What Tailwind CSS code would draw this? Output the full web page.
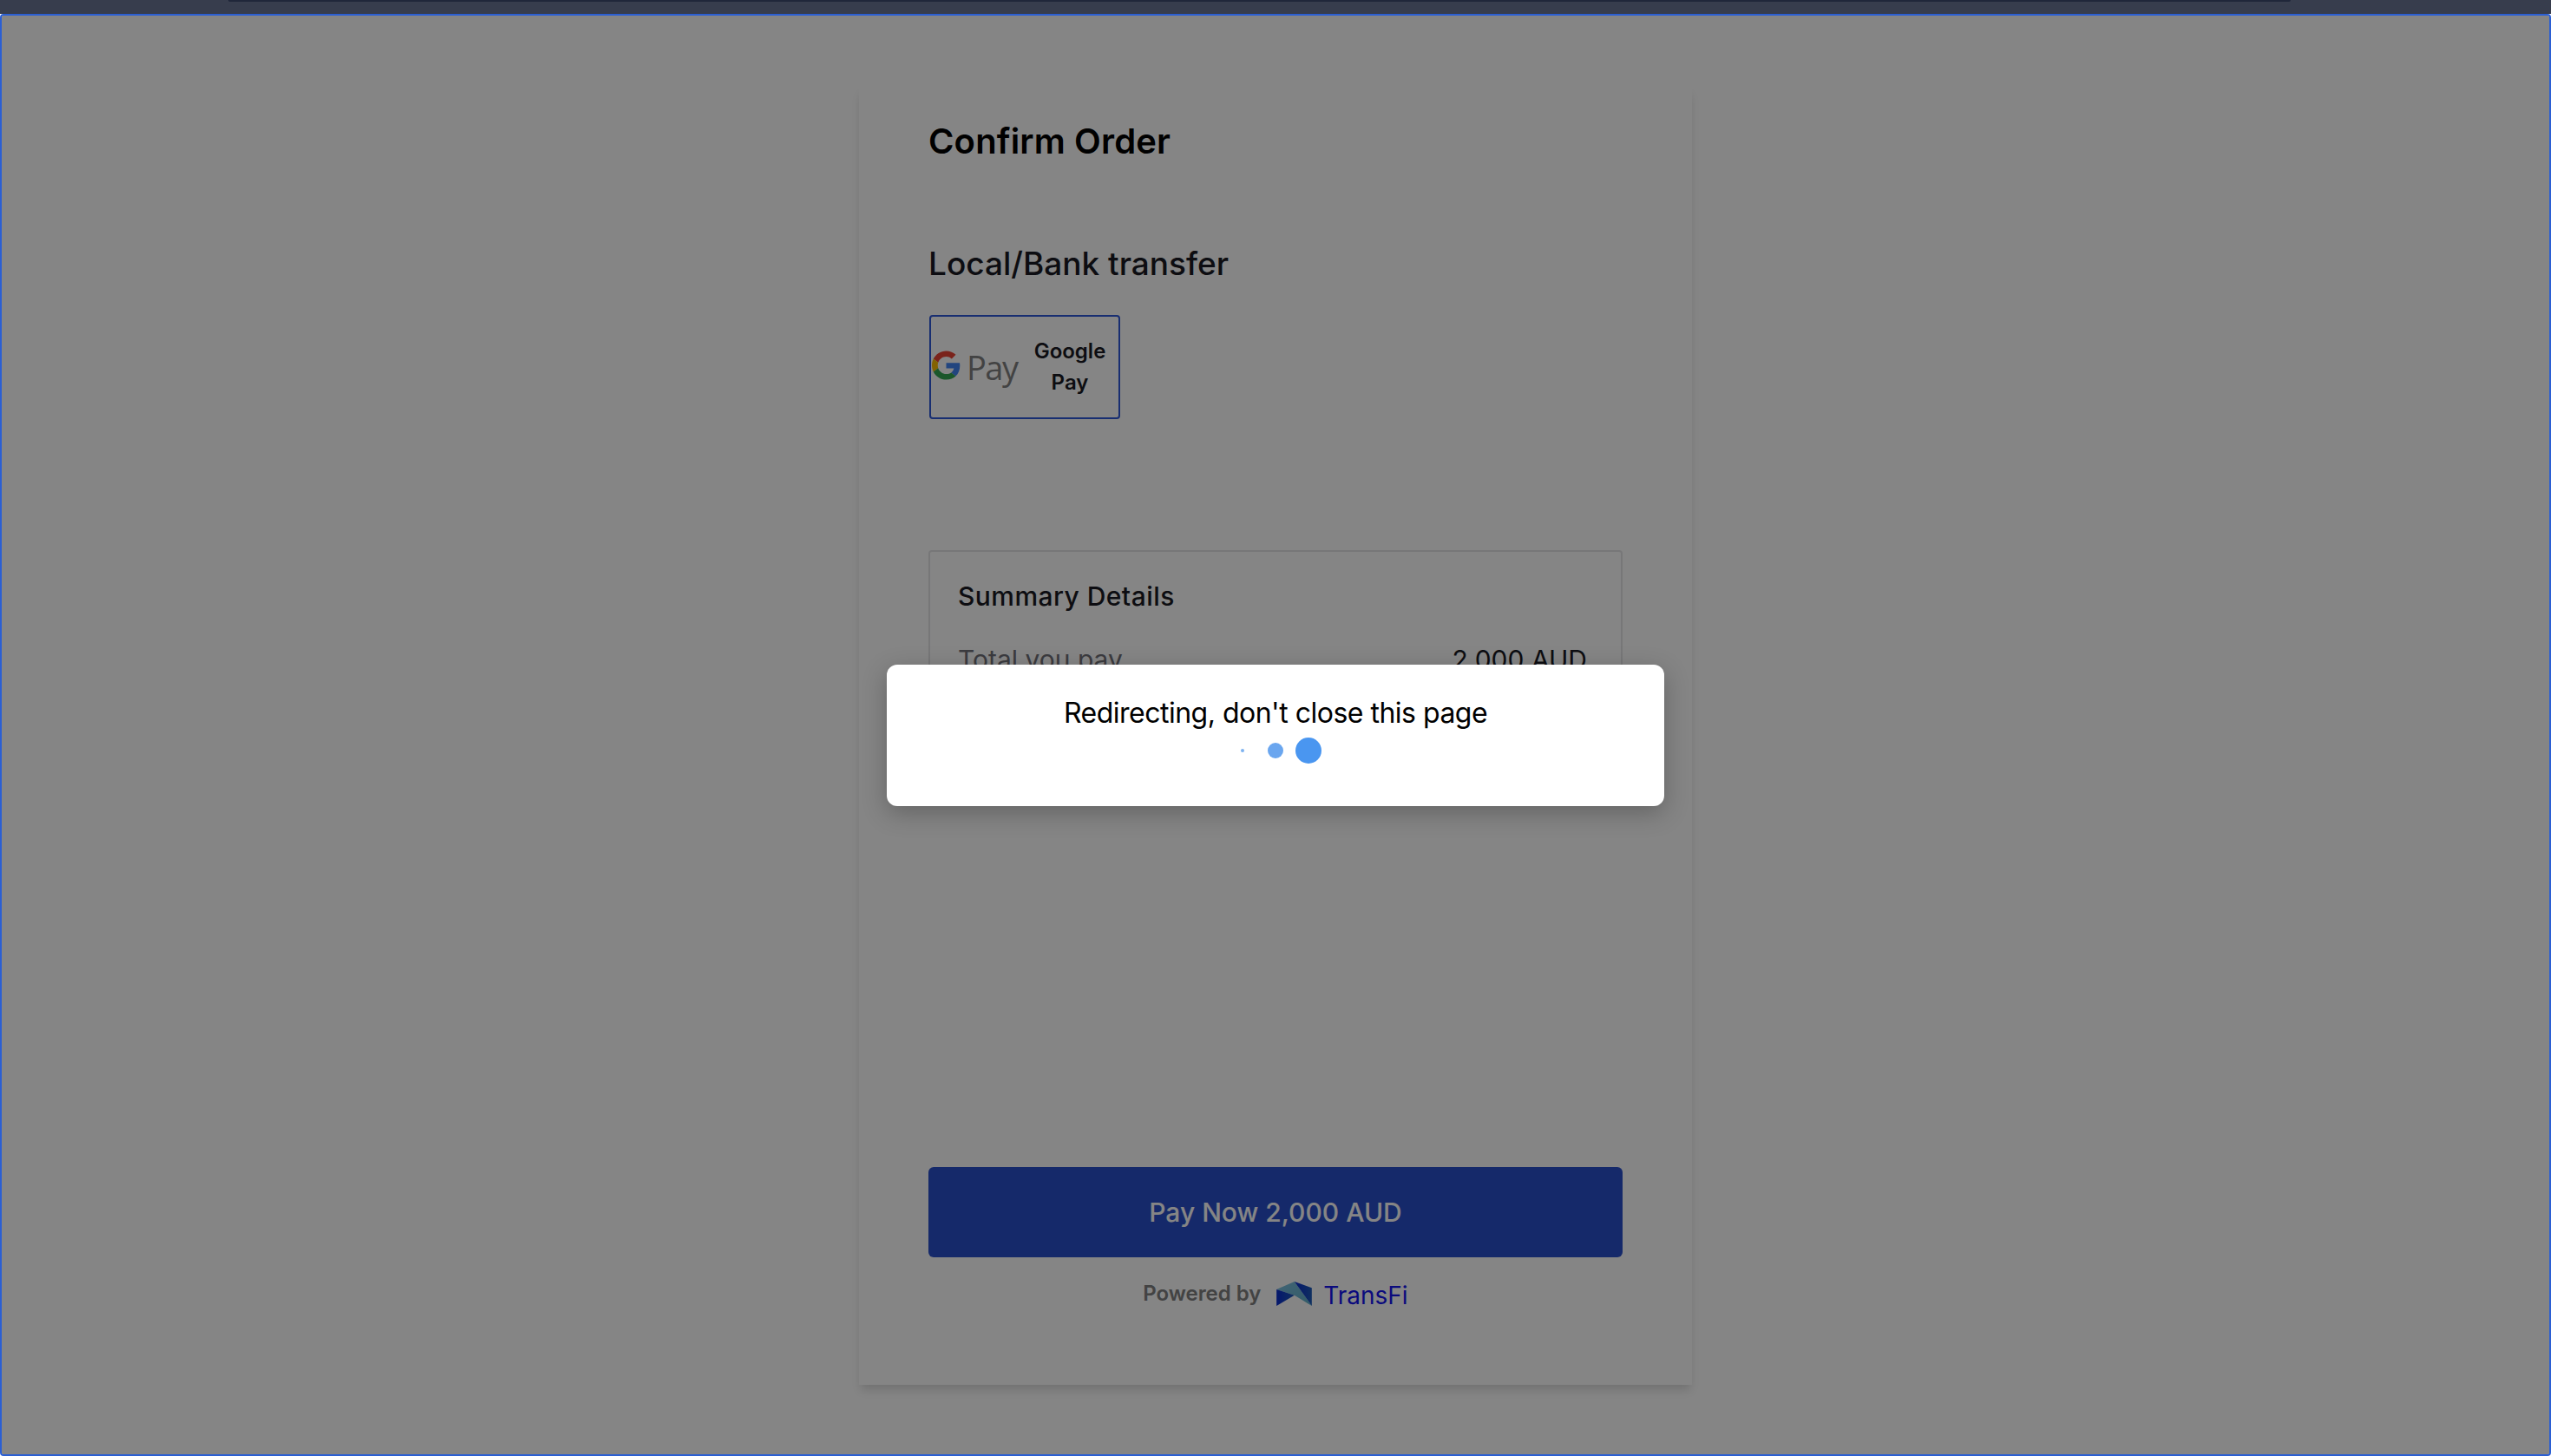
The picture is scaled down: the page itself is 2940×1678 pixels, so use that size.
<!doctype html>
<html lang="en">
<head>
<meta charset="utf-8">
<script src="https://cdn.jsdelivr.net/npm/@tailwindcss/browser@4"></script>
<title>Confirm Order</title>
</head>
<body class="h-[1678px] w-[2940px] overflow-hidden bg-white font-['Inter',sans-serif]">
<div class="flex h-full flex-col">
  <header class="h-4 shrink-0 bg-[#373d4d] pl-[263px]">
    <div class="h-0.5 w-[2377px] rounded-b-md bg-[#20273a]"></div>
  </header>
  <div class="relative flex-1 overflow-hidden rounded-sm border-2 border-[#2b5fd3] bg-white">
    <main class="mx-auto mt-[82px] flex h-[1496px] w-[960px] flex-col bg-white px-20 pt-[43px] pb-[87px] shadow-[0_8px_10px_-2px_rgba(0,0,0,0.14)]">
      <h1 class="h-10 text-[40px] leading-10 font-semibold tracking-[0.15px] text-black">Confirm Order</h1>
      <h2 class="mt-[101px] h-10 text-[37px] leading-10 font-medium text-[#1a1a23]">Local/Bank transfer</h2>
      <button class="mt-[39px] ml-px flex h-[120px] w-[220px] items-center rounded-[4px] border-2 border-[#2f58d8] pl-px">
        <svg class="mb-[5px] h-[34px] w-[33px] shrink-0" viewBox="0 0 48 48" aria-hidden="true">
          <path fill="#EA4335" d="M24 9.5c3.54 0 6.71 1.22 9.21 3.6l6.85-6.85C35.9 2.38 30.47 0 24 0 14.62 0 6.51 5.38 2.56 13.22l7.98 6.19C12.43 13.72 17.74 9.5 24 9.5z"/>
          <path fill="#4285F4" d="M46.98 24.55c0-1.57-.15-3.09-.38-4.55H24v9.02h12.94c-.58 2.96-2.26 5.48-4.78 7.18l7.73 6c4.51-4.18 7.09-10.36 7.09-17.65z"/>
          <path fill="#FBBC05" d="M10.53 28.59c-.48-1.45-.76-2.99-.76-4.59s.27-3.14.76-4.59l-7.98-6.19C.92 16.46 0 20.12 0 24c0 3.88.92 7.54 2.56 10.78l7.97-6.19z"/>
          <path fill="#34A853" d="M24 48c6.48 0 11.93-2.13 16.02-5.81l-7.73-6c-2.15 1.45-4.92 2.3-8.29 2.3-6.26 0-11.57-4.22-13.47-9.91l-7.98 6.19C6.51 42.62 14.62 48 24 48z"/>
        </svg>
        <span class="ml-[7px] font-['Open_Sans',sans-serif] text-[38px] leading-none font-normal tracking-[-1.5px] text-[#808080]">Pay</span>
        <span class="ml-auto w-[112px] text-center text-[24px] leading-9 font-semibold text-[#1a1a23]">Google Pay</span>
      </button>
      <section class="mt-[151px] h-[280px] rounded-[4px] border-2 border-[#e4e4e7] px-8 pt-[31px]">
        <h3 class="h-10 text-[30px] leading-10 font-medium tracking-[0.45px] text-[#1a1a23]">Summary Details</h3>
        <div class="mt-[33px] flex h-10 items-center justify-between pr-[7px] text-[30px] leading-10">
          <span class="text-[#71717a]">Total you pay</span>
          <span class="text-[#1a1a23]">2,000 AUD</span>
        </div>
      </section>
      <button class="mt-auto flex h-[104px] w-full shrink-0 items-center justify-center rounded-md bg-[#2a50cc] text-[30px] font-medium text-white">Pay Now 2,000 AUD</button>
      <footer class="mt-6 flex h-9 items-center justify-center">
        <span class="text-[24px] font-semibold tracking-[-0.05px] text-[#808080]">Powered by</span>
        <svg class="ml-[18px] h-[28px] w-[41px]" viewBox="0 0 122 84" aria-hidden="true">
          <defs>
            <linearGradient id="tfTeal" x1="0" y1="0" x2="1" y2="1"><stop offset="0" stop-color="#7ec0e0"/><stop offset="1" stop-color="#5fb0c8"/></linearGradient>
            <linearGradient id="tfDark" x1="0" y1="0" x2="1" y2="0"><stop offset="0" stop-color="#0a2bd0"/><stop offset="1" stop-color="#1d5bb8"/></linearGradient>
          </defs>
          <polygon fill="url(#tfTeal)" points="0,27 62,0 122,84 62,47"/>
          <polygon fill="url(#tfDark)" points="0,27 62,47 0,84"/>
          <polygon fill="url(#tfDark)" points="62,0 122,22 122,84"/>
        </svg>
        <span class="mt-[3px] ml-[13px] text-[28px] text-[#1414f0]">TransFi</span>
      </footer>
    </main>
    <div class="absolute inset-0 flex items-center justify-center bg-black/48">
      <div role="status" class="flex h-[163px] w-[896px] flex-col items-center rounded-xl bg-white pt-[38px] shadow-[0_8px_28px_rgba(0,0,0,0.25)]">
        <p class="h-9 text-[32px] leading-9 tracking-[-0.5px] text-black">Redirecting, don't close this page</p>
        <div class="mt-[10px] flex h-[30px] w-[106px] items-center pl-[13px]">
          <span class="h-1 w-1 rounded-full bg-[#7eb3f0]"></span>
          <span class="ml-[27px] h-[18px] w-[18px] rounded-full bg-[#6aa6ef]"></span>
          <span class="ml-[14px] h-[30px] w-[30px] rounded-full bg-[#4a96f0]"></span>
        </div>
      </div>
    </div>
  </div>
</div>
</body>
</html>
